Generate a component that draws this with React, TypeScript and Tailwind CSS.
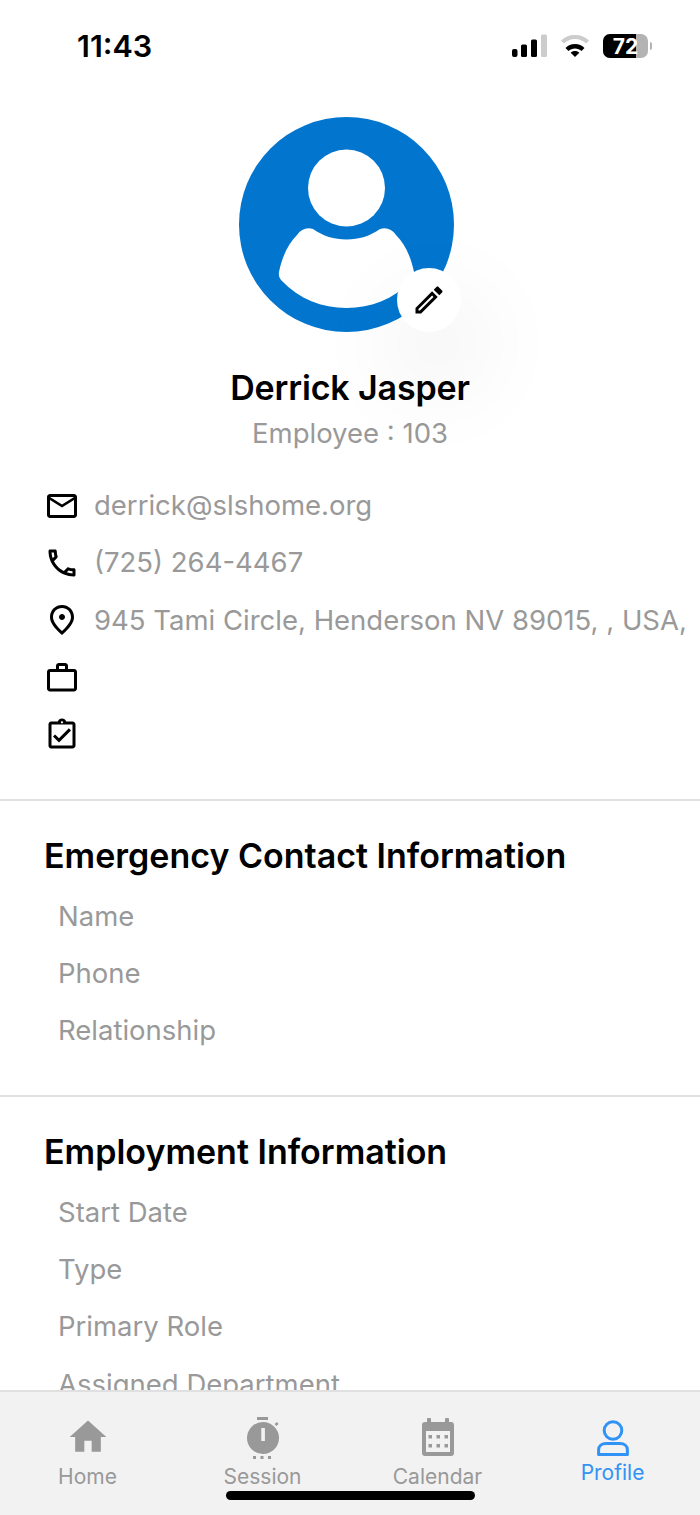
import { MdOutlineEdit, MdOutlineEmail, MdOutlineLocalPhone, MdOutlinePlace, MdOutlineWorkOutline, MdOutlineAssignmentTurnedIn, MdHome } from 'react-icons/md'

const FONT = "font-['Inter','Liberation_Sans',sans-serif]"

function StatusIcons() {
  return (
    <div className="flex items-center">
      <svg width="35" height="24" viewBox="0 0 35 24">
        <rect x="0" y="15" width="5.5" height="8" rx="2" fill="#000" />
        <rect x="9" y="10.5" width="6" height="12.5" rx="1.5" fill="#000" />
        <rect x="19" y="5.5" width="6" height="17.5" rx="1.5" fill="#000" />
        <rect x="29" y="0.5" width="6" height="22.5" rx="1.5" fill="#ccc" />
      </svg>
      <svg width="30" height="24" viewBox="0 0 30 24" className="ml-[13px]">
        <path d="M15 6 C21 6 25.5 8 29 11.5 L26 14.5 C23 11.5 19.5 10 15 10 C10.5 10 7 11.5 4 14.5 L1 11.5 C4.5 8 9 6 15 6 Z" fill="#ccc" transform="translate(0 -5)" />
        <path d="M15 10 C19 10 22 11.5 24.5 14 L21.5 17 C19.8 15.3 17.6 14.4 15 14.4 C12.4 14.4 10.2 15.3 8.5 17 L5.5 14 C8 11.5 11 10 15 10 Z" fill="#000" />
        <path d="M15 17 C16.8 17 18.2 17.6 19.3 18.7 L15 23 L10.7 18.7 C11.8 17.6 13.2 17 15 17 Z" fill="#000" />
      </svg>
      <div className="relative ml-[13px] flex h-[24px] w-[45px] overflow-hidden rounded-[7px] bg-[#b3b3b3]">
        <div className="h-full w-[33px] bg-black" />
        <span className="absolute inset-0 flex items-center justify-center text-[21px] font-bold leading-none text-white">72</span>
      </div>
      <div className="ml-[2px] h-[8px] w-[2px] rounded-r-full bg-[#b3b3b3]" />
    </div>
  )
}

function AvatarGlyph() {
  return (
    <svg width="215" height="215" viewBox="0 0 215 215">
      <circle cx="107.5" cy="107.5" r="107.5" fill="#0276cf" />
      <circle cx="107.5" cy="71" r="38.5" fill="#fff" />
      <path d="M58 118 C62 112 68 110 74 112 C84 119 95 122.5 107.5 122.5 C120 122.5 131 119 141 112 C147 110 153 112 157 118 C166 127 172 140 175 155 C175.5 158 175 161 172 164 C155 182 132 191 107.5 191 C83 191 60 182 43 164 C40 161 39.5 158 40 155 C43 140 49 127 58 118 Z" fill="#fff" />
    </svg>
  )
}

function InfoRow({ icon, text }: { icon: React.ReactNode; text?: string }) {
  return (
    <div className="flex h-[57.33px] items-center">
      <div className="flex w-[50px] shrink-0 items-center text-black">{icon}</div>
      {text && <span className="whitespace-nowrap text-[27.5px] leading-none text-[#999]">{text}</span>}
    </div>
  )
}

function Section({ title, fields }: { title: string; fields: string[] }) {
  return (
    <section className="border-t-2 border-[#e2e2e2] px-[44px] pt-[32px]">
      <h2 className="text-[34px] font-semibold leading-[46px] text-black">{title}</h2>
      <div className="mt-[9px] pl-[14px]">
        {fields.map((f) => (
          <div key={f} className="flex h-[57.25px] items-center whitespace-nowrap text-[27.5px] text-[#999]">
            {f}
          </div>
        ))}
      </div>
    </section>
  )
}

function SessionIcon() {
  return (
    <svg width="36" height="44" viewBox="0 0 36 44" fill="#999">
      <rect x="12" y="0" width="11" height="3" />
      <path d="M29.5 7 l2.5 -2 l1.5 2 l-2 2 z" />
      <circle cx="18" cy="21" r="16" />
      <rect x="16.3" y="11" width="3.6" height="13" fill="#f2f2f2" />
      <rect x="8" y="39" width="3" height="3" />
      <rect x="15.5" y="39" width="3" height="3" />
      <rect x="23" y="39" width="3" height="3" />
    </svg>
  )
}

function CalendarIcon() {
  return (
    <svg width="34" height="38" viewBox="0 0 34 38">
      <rect x="6" y="0" width="4" height="6" rx="1" fill="#999" />
      <rect x="24" y="0" width="4" height="6" rx="1" fill="#999" />
      <rect x="1" y="4" width="32" height="34" rx="3" fill="#999" />
      <rect x="5" y="13" width="24" height="21" fill="#f2f2f2" />
      {[18, 27].map((y) =>
        [7, 15, 23].map((x) => <rect key={`${x}-${y}`} x={x + 0.5} y={y - 1} width="3.5" height="3.5" fill="#999" />),
      )}
    </svg>
  )
}

function ProfileIcon() {
  return (
    <svg width="32" height="36" viewBox="0 0 32 36" fill="none" stroke="#3193f5" strokeWidth="3">
      <circle cx="16" cy="10.5" r="8.8" />
      <path d="M1.6 34.4 V30 C1.6 26 5 23.5 9 23.5 H23 C27 23.5 30.4 26 30.4 30 V34.4 Z" strokeLinejoin="round" />
    </svg>
  )
}

function Tab({ icon, label, iconBox, labelGap, active }: { icon: React.ReactNode; label: string; iconBox: string; labelGap: string; active?: boolean }) {
  return (
    <div className="flex h-full flex-col items-center">
      <div className={`flex items-end justify-center ${iconBox}`}>{icon}</div>
      <span className={`text-[21px] leading-[30px] ${labelGap} ${active ? 'text-[#3193f5]' : 'text-[#999]'}`}>{label}</span>
    </div>
  )
}

export default function App() {
  return (
    <div className={`${FONT} relative flex h-[1515px] w-[700px] flex-col overflow-hidden bg-white`}>
      <div className="flex h-[92px] shrink-0 items-center justify-between pl-[77px] pr-[48px]">
        <span className="text-[30.5px] font-semibold leading-none text-black">11:43</span>
        <StatusIcons />
      </div>

      <main className="min-h-0 flex-1 overflow-hidden">
        <div className="flex flex-col items-center pt-[25px]">
          <div className="relative ml-[-7px] h-[215px] w-[215px]">
            <AvatarGlyph />
            <div className="absolute left-[158px] top-[151px] flex h-[64px] w-[64px] items-center justify-center rounded-full bg-white shadow-[8px_43px_90px_20px_rgba(0,0,0,0.05)]">
              <MdOutlineEdit size={36} color="#000" />
            </div>
          </div>
          <h1 className="mt-[33px] text-[34px] font-semibold leading-[46px] tracking-[-0.15px] text-black">Derrick Jasper</h1>
          <p className="mt-[3px] text-[27.5px] leading-[38px] text-[#999]">Employee : 103</p>
        </div>

        <div className="px-[44px] pb-[35px] pt-[25px]">
          <InfoRow icon={<MdOutlineEmail size={36} />} text="derrick@slshome.org" />
          <InfoRow icon={<MdOutlineLocalPhone size={36} />} text="(725) 264-4467" />
          <InfoRow icon={<MdOutlinePlace size={36} />} text="945 Tami Circle, Henderson NV 89015, , USA," />
          <InfoRow icon={<MdOutlineWorkOutline size={36} />} />
          <InfoRow icon={<MdOutlineAssignmentTurnedIn size={36} />} />
        </div>

        <Section title="Emergency Contact Information" fields={['Name', 'Phone', 'Relationship']} />
        <div className="h-[35.5px]" />
        <Section title="Employment Information" fields={['Start Date', 'Type', 'Primary Role', 'Assigned Department']} />
      </main>

      <nav className="grid h-[125px] shrink-0 grid-cols-4 border-t-2 border-[#e0e0e0] bg-[#f2f2f2]">
        <Tab icon={<MdHome size={44} color="#999" />} label="Home" iconBox="h-[67px]" labelGap="mt-[3px]" />
        <Tab icon={<SessionIcon />} label="Session" iconBox="h-[69px]" labelGap="mt-[1px]" />
        <Tab icon={<CalendarIcon />} label="Calendar" iconBox="h-[64px]" labelGap="mt-[6px]" />
        <Tab icon={<ProfileIcon />} label="Profile" iconBox="h-[64px]" labelGap="mt-[2px]" active />
      </nav>

      <div className="absolute left-[226px] top-[1491px] h-[9px] w-[249px] rounded-full bg-black" />
    </div>
  )
}
